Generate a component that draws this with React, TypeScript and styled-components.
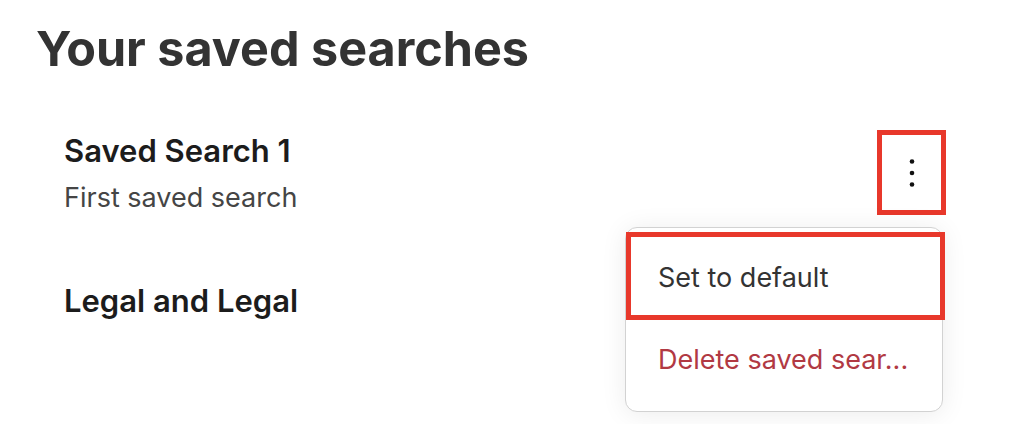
import React from 'react';
import styled, { createGlobalStyle, css } from 'styled-components';

const GlobalStyle = createGlobalStyle`
  html, body {
    margin: 0;
    padding: 0;
    background: #ffffff;
  }
  body {
    font-family: Inter, "Noto Sans", "Liberation Sans", sans-serif;
    -webkit-font-smoothing: antialiased;
  }
  * {
    box-sizing: border-box;
  }
`;

const annotationRed = '#e8382b';

const Page = styled.div`
  width: 1020px;
  height: 424px;
  overflow: hidden;
  padding: 20px 0 0 36px;
  background: #ffffff;
`;

const PageTitle = styled.h1`
  margin: 0;
  font-size: 48.5px;
  line-height: 58px;
  font-weight: 700;
  color: #333333;
`;

const SearchList = styled.ul`
  list-style: none;
  margin: 55px 0 0;
  padding: 0 0 0 28px;
  width: 910px;
`;

const SearchRow = styled.li`
  position: relative;
  display: flex;
  align-items: flex-start;
  justify-content: space-between;
  margin-bottom: 68px;
`;

const SearchText = styled.div`
  display: flex;
  flex-direction: column;
  gap: 13px;
`;

const SearchName = styled.span`
  font-size: 31px;
  line-height: 36px;
  font-weight: 600;
  color: #1c1c1c;
`;

const SearchDescription = styled.span`
  font-size: 27px;
  line-height: 32px;
  font-weight: 400;
  color: #454545;
`;

const KebabButton = styled.button<{ $marked?: boolean }>`
  display: flex;
  align-items: center;
  justify-content: center;
  width: 69px;
  height: 85px;
  margin-top: -3px;
  padding: 0;
  background: transparent;
  border: 5px solid ${({ $marked }) => ($marked ? annotationRed : 'transparent')};
  cursor: pointer;
`;

const Menu = styled.div`
  position: absolute;
  top: 94px;
  right: 3px;
  width: 318px;
  padding: 4px 0 15px;
  background: #ffffff;
  border: 1px solid #d2d2d2;
  border-radius: 12px;
  box-shadow: 0 2px 26px rgba(0, 0, 0, 0.08);
  z-index: 2;
`;

const MenuItem = styled.div<{ $marked?: boolean; $danger?: boolean }>`
  display: flex;
  align-items: center;
  height: ${({ $marked }) => ($marked ? '88px' : '76px')};
  padding: 2px 0 0 27px;
  border: 5px solid transparent;
  font-size: 27px;
  font-weight: 400;
  color: ${({ $danger }) => ($danger ? '#b13943' : '#333333')};
  white-space: nowrap;
  cursor: pointer;
  ${({ $marked }) =>
    $marked &&
    css`
      margin: 0 -3px 0 0;
      border-color: ${annotationRed};
    `}
`;

const KebabIcon = () => (
  <svg width="8" height="32" viewBox="0 0 8 32" aria-hidden="true">
    <circle cx="4" cy="4.5" r="2.3" fill="#111" />
    <circle cx="4" cy="16" r="2.3" fill="#111" />
    <circle cx="4" cy="27.5" r="2.3" fill="#111" />
  </svg>
);

const searches = [
  { name: 'Saved Search 1', description: 'First saved search', open: true },
  { name: 'Legal and Legal', description: '', open: false },
];

export default function App() {
  return (
    <>
      <GlobalStyle />
      <Page>
        <PageTitle>Your saved searches</PageTitle>
        <SearchList>
          {searches.map((s) => (
            <SearchRow key={s.name}>
              <SearchText>
                <SearchName>{s.name}</SearchName>
                {s.description && <SearchDescription>{s.description}</SearchDescription>}
              </SearchText>
              {s.open && (
                <>
                  <KebabButton $marked aria-label="More options">
                    <KebabIcon />
                  </KebabButton>
                  <Menu role="menu">
                    <MenuItem $marked role="menuitem">Set to default</MenuItem>
                    <MenuItem $danger role="menuitem">Delete saved sear...</MenuItem>
                  </Menu>
                </>
              )}
            </SearchRow>
          ))}
        </SearchList>
      </Page>
    </>
  );
}
